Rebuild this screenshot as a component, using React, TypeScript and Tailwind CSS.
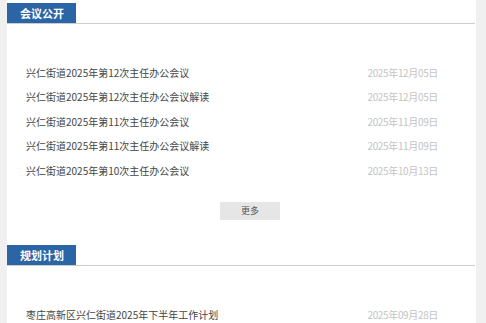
const meetings = [
  { title: "兴仁街道2025年第12次主任办公会议", date: "2025年12月05日" },
  { title: "兴仁街道2025年第12次主任办公会议解读", date: "2025年12月05日" },
  { title: "兴仁街道2025年第11次主任办公会议", date: "2025年11月09日" },
  { title: "兴仁街道2025年第11次主任办公会议解读", date: "2025年11月09日" },
  { title: "兴仁街道2025年第10次主任办公会议", date: "2025年10月13日" },
];

const plans = [{ title: "枣庄高新区兴仁街道2025年下半年工作计划", date: "2025年09月28日" }];

function SectionHeader({ label }: { label: string }) {
  return (
    <div className="border-b border-[#cccccc] mr-[1px]">
      <div className="w-[69px] h-[20px] bg-[#2c65a5] text-white font-bold text-[11px] leading-[20px] pl-[13px]">
        {label}
      </div>
    </div>
  );
}

function Row({ title, date }: { title: string; date: string }) {
  return (
    <li className="flex items-center justify-between h-[24.5px] pl-[19px] pr-[38px] text-[10px]">
      <span className="text-[#444444]">{title}</span>
      <span className="text-[#c4c4c4] tracking-[-0.35px]">{date}</span>
    </li>
  );
}

export default function App() {
  return (
    <div
      className="w-[486px] h-[323px] overflow-hidden bg-[#f0f0f0] pl-[7px] pr-[10px]"
      style={{ fontFamily: '"Noto Sans CJK SC", "Noto Sans", sans-serif' }}
    >
      <div className="bg-white h-full">
        {/* 会议公开 */}
        <section className="pt-[3px]">
          <SectionHeader label="会议公开" />
          <ul className="pt-[36px]">
            {meetings.map((m) => (
              <Row key={m.title} {...m} />
            ))}
          </ul>
          <div className="flex justify-center pt-[19px] pl-[17px]">
            <button className="w-[60px] h-[18px] bg-[#e6e6e6] text-[#555555] text-[9px] leading-[18px]">
              更多
            </button>
          </div>
        </section>

        {/* 规划计划 */}
        <section className="pt-[25px]">
          <SectionHeader label="规划计划" />
          <ul className="pt-[37px]">
            {plans.map((p) => (
              <Row key={p.title} {...p} />
            ))}
          </ul>
        </section>
      </div>
    </div>
  );
}
